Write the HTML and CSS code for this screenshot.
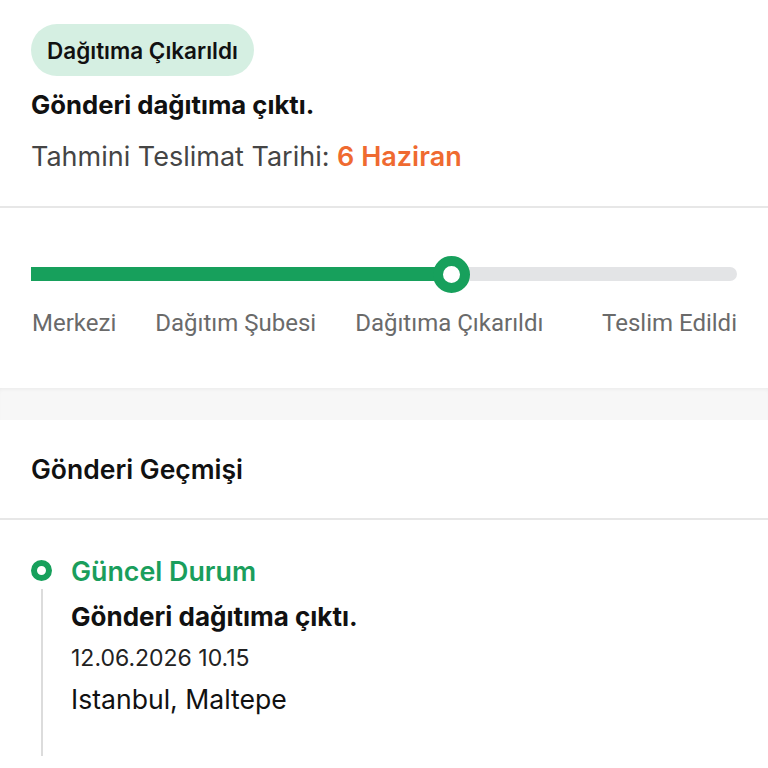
FILE: index.html
```
<!DOCTYPE html>
<html lang="tr">
<head>
<meta charset="utf-8">
<link rel="stylesheet" href="styles.css">
</head>
<body>
<section class="summary">
  <span class="badge">Dağıtıma Çıkarıldı</span>
  <h1 class="title">Gönderi dağıtıma çıktı.</h1>
  <p class="eta">Tahmini Teslimat Tarihi: <span class="eta-date">6 Haziran</span></p>
</section>
<section class="progress">
  <div class="track">
    <div class="fill" style="width:59.6%"></div>
    <div class="knob" style="left:59.6%"></div>
  </div>
  <div class="labels">
    <span>Merkezi</span>
    <span>Dağıtım Şubesi</span>
    <span>Dağıtıma Çıkarıldı</span>
    <span class="last">Teslim Edildi</span>
  </div>
</section>
<div class="band"></div>
<section class="history">
  <h2 class="history-title">Gönderi Geçmişi</h2>
  <div class="timeline">
    <div class="item">
      <div class="marker"><span class="dot"></span><span class="line"></span></div>
      <div class="content">
        <div class="status">Güncel Durum</div>
        <div class="desc">Gönderi dağıtıma çıktı.</div>
        <div class="date">12.06.2026 10.15</div>
        <div class="place">Istanbul, Maltepe</div>
      </div>
    </div>
  </div>
</section>
</body>
</html>
```
FILE: styles.css
```
* { box-sizing: border-box; }
html, body { margin: 0; padding: 0; background: #fff; }
body {
  font-family: Inter, "Noto Sans", sans-serif;
  color: #111;
  width: 768px;
  height: 768px;
  overflow: hidden;
}
.summary {
  padding: 24px 31px 0;
  height: 208px;
  border-bottom: 2px solid #e7e7e7;
}
.badge {
  display: inline-flex;
  align-items: center;
  height: 52px;
  padding: 0 16px 0 16px;
  border-radius: 26px;
  background: #d5efe2;
  font-size: 22.5px;
  font-weight: 600;
  color: #111;
}
.title {
  margin: 14px 0 0;
  font-size: 25.7px;
  font-weight: 700;
  line-height: 30px;
}
.eta {
  margin: 22px 0 0;
  font-size: 27px;
  line-height: 30px;
  color: #454545;
}
.eta-date { color: #ef6a30; font-weight: 600; }

.progress {
  padding: 59px 31px 0;
  height: 180px;
}
.track {
  position: relative;
  height: 14px;
  background: #e3e4e6;
  border-radius: 7px;
}
.fill {
  height: 14px;
  background: #17a05c;
}
.knob {
  position: absolute;
  top: 50%;
  width: 37px;
  height: 37px;
  margin: -18.5px 0 0 -18.5px;
  border: 10px solid #17a05c;
  border-radius: 50%;
  background: #fff;
}
.labels {
  display: flex;
  gap: 39px;
  margin-top: 28px;
  padding-left: 1px;
  font-family: Roboto, "Liberation Sans", sans-serif;
  font-size: 24px;
  line-height: 28px;
  color: #6a6a6a;
}
.labels .last { margin-left: auto; }

.band {
  height: 32px;
  background: #f7f7f7;
  box-shadow: inset 0 3px 4px -2px rgba(0,0,0,0.06);
}

.history-title {
  margin: 0;
  height: 100px;
  padding-left: 31px;
  display: flex;
  align-items: center;
  font-size: 26.5px;
  font-weight: 600;
  border-bottom: 2px solid #e7e7e7;
}
.timeline { padding: 39px 31px 0; }
.item {
  display: grid;
  grid-template-columns: 21px 1fr;
  column-gap: 19px;
}
.marker {
  display: flex;
  flex-direction: column;
  align-items: center;
  padding-top: 1px;
}
.dot {
  width: 21px;
  height: 21px;
  border: 6px solid #17a05c;
  border-radius: 50%;
  background: #fff;
}
.line {
  width: 2px;
  height: 167px;
  margin-top: 8px;
  background: #dcdcdc;
}
.status {
  font-size: 26.8px;
  font-weight: 600;
  line-height: 24px;
  color: #1a9e5c;
}
.desc {
  margin-top: 19px;
  font-size: 26px;
  font-weight: 700;
  line-height: 30px;
}
.date {
  margin-top: 12px;
  font-size: 23px;
  line-height: 28px;
  color: #222;
}
.place {
  margin-top: 12px;
  font-size: 26.6px;
  line-height: 30px;
  color: #111;
}
```
